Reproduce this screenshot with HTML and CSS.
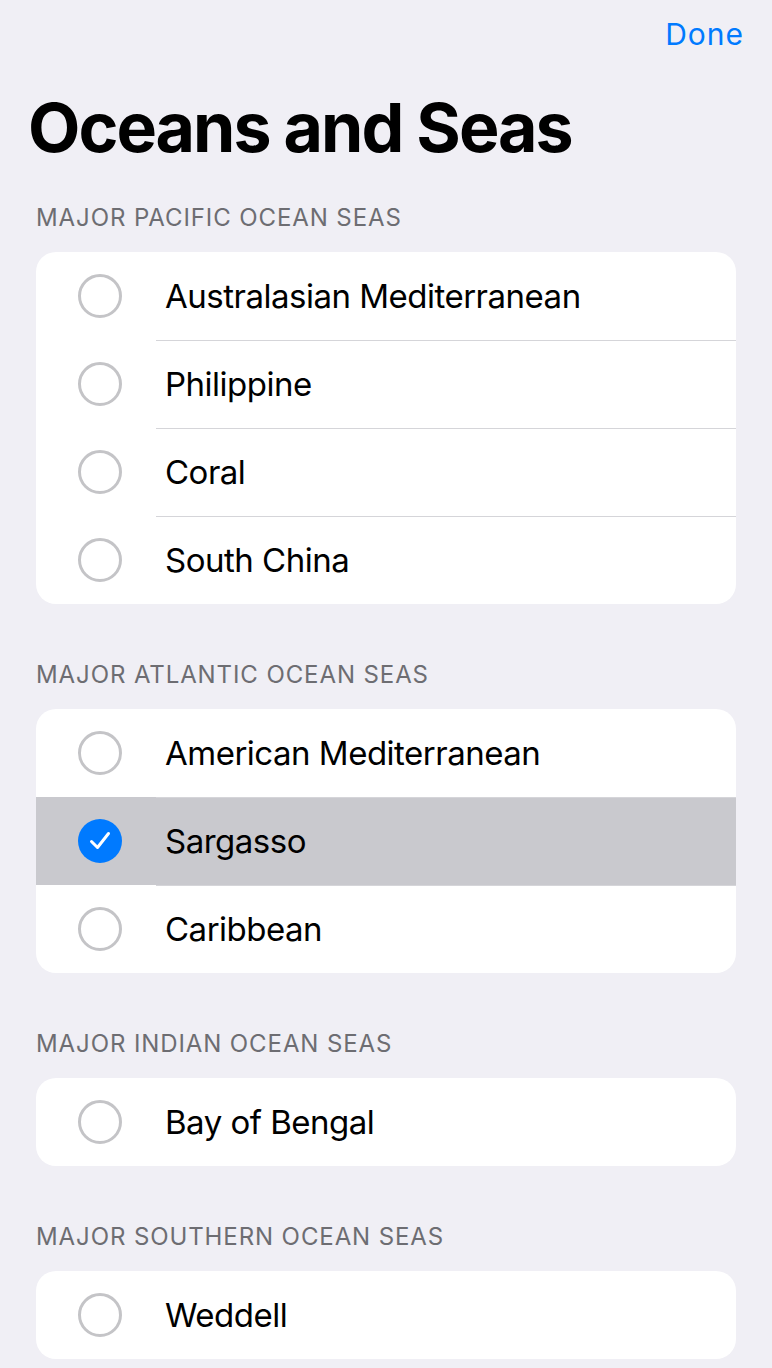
FILE: index.html
```html
<!DOCTYPE html>
<html>
<head>
<meta charset="utf-8">
<link rel="stylesheet" href="styles.css">
</head>
<body>
<div class="nav"><span class="done">Done</span></div>
<h1 class="title">Oceans and Seas</h1>

<section class="section">
  <div class="header">MAJOR PACIFIC OCEAN SEAS</div>
  <div class="card">
    <div class="row"><span class="radio"></span><span class="label">Australasian Mediterranean</span></div>
    <div class="row"><span class="radio"></span><span class="label">Philippine</span></div>
    <div class="row"><span class="radio"></span><span class="label">Coral</span></div>
    <div class="row"><span class="radio"></span><span class="label">South China</span></div>
  </div>
</section>

<section class="section">
  <div class="header">MAJOR ATLANTIC OCEAN SEAS</div>
  <div class="card">
    <div class="row"><span class="radio"></span><span class="label">American Mediterranean</span></div>
    <div class="row selected"><span class="radio checked"><svg viewBox="0 0 44 44" width="44" height="44"><path d="M13.5 22.5 L19.5 28.5 L30.5 14.5" fill="none" stroke="#fff" stroke-width="3" stroke-linecap="round" stroke-linejoin="round"/></svg></span><span class="label">Sargasso</span></div>
    <div class="row"><span class="radio"></span><span class="label">Caribbean</span></div>
  </div>
</section>

<section class="section">
  <div class="header">MAJOR INDIAN OCEAN SEAS</div>
  <div class="card">
    <div class="row"><span class="radio"></span><span class="label">Bay of Bengal</span></div>
  </div>
</section>

<section class="section">
  <div class="header">MAJOR SOUTHERN OCEAN SEAS</div>
  <div class="card">
    <div class="row"><span class="radio"></span><span class="label">Weddell</span></div>
  </div>
</section>
</body>
</html>
```

FILE: styles.css
```css
* { box-sizing: border-box; }
html, body {
  margin: 0;
  padding: 0;
  background: #f0eff5;
  font-family: Inter, "Noto Sans", "Liberation Sans", sans-serif;
  color: #000;
}
body { height: 1368px; overflow: hidden; }
.nav {
  height: 86px;
  display: flex;
  justify-content: flex-end;
  align-items: flex-start;
  padding: 17px 28px 0 0;
}
.done {
  color: #007aff;
  font-size: 30px;
  line-height: 34px;
  letter-spacing: 1px;
}
.title {
  margin: 0 0 0 28px;
  font-size: 68px;
  line-height: 82px;
  font-weight: 700;
  letter-spacing: -2px;
}
.section {
  padding: 0 36px;
  margin-top: 56px;
}
.section:first-of-type { margin-top: 35px; }
.header {
  font-size: 24px;
  line-height: 29px;
  color: #6d6d72;
  letter-spacing: 0.9px;
  margin-bottom: 20px;
}
.card {
  background: #fff;
  border-radius: 20px;
  overflow: hidden;
}
.row {
  height: 88px;
  display: flex;
  align-items: center;
  position: relative;
}
.row + .row::before {
  content: "";
  position: absolute;
  top: 0;
  left: 120px;
  right: 0;
  height: 1px;
  background: #d5d5d9;
}
.row.selected { background: #c9c9ce; }
.radio {
  width: 44px;
  height: 44px;
  margin-left: 42px;
  border-radius: 50%;
  border: 3px solid #c4c4c7;
  flex: none;
}
.radio.checked {
  border: none;
  background: #007aff;
}
.radio svg { display: block; }
.label {
  margin-left: 43px;
  font-size: 33px;
  line-height: 40px;
  letter-spacing: -0.5px;
}
```
